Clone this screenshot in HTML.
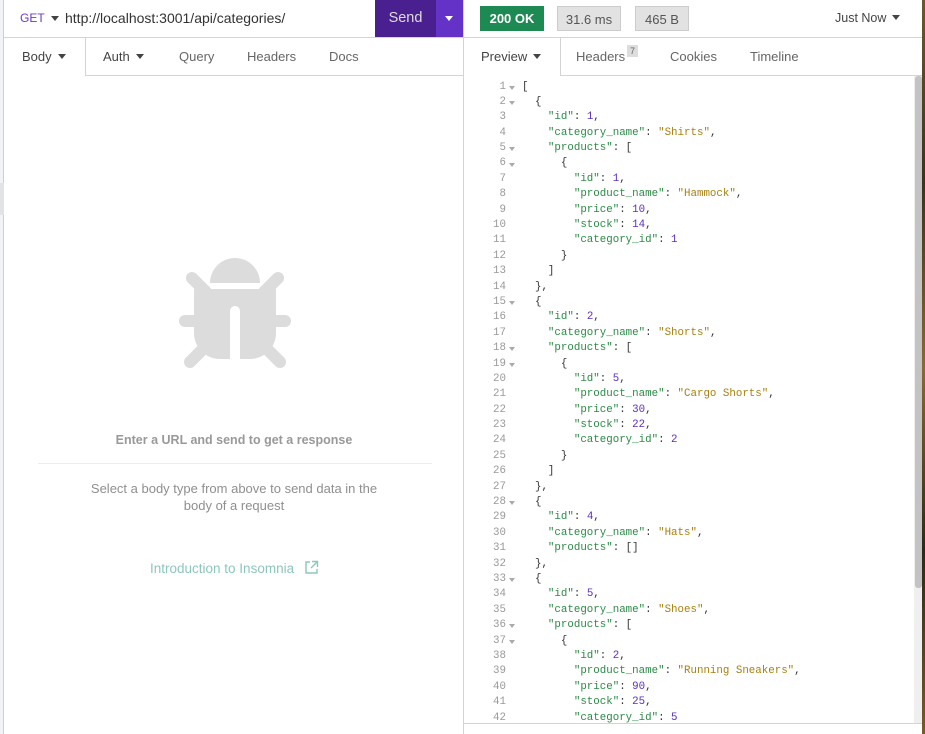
<!DOCTYPE html>
<html><head><meta charset="utf-8"><style>
*{box-sizing:border-box;margin:0;padding:0}
body{width:925px;height:734px;overflow:hidden;background:#fff;font-family:"Liberation Sans",sans-serif;position:relative}
.abs{position:absolute}
.strip{left:0;top:0;width:4px;height:734px;background:#f1f3f6;border-right:1px solid #cfcfcf}
.strip2{left:0;top:183px;width:4px;height:32px;background:#e2e3e5}
.div{left:463px;top:0;width:1px;height:734px;background:#d4d4d4}
.hl{height:1px;background:#d4d4d4}
.tab{position:absolute;top:38px;height:37px;line-height:37px;font-size:13px;color:#666}
.caret{display:inline-block;width:0;height:0;border-left:4px solid transparent;border-right:4px solid transparent;border-top:5px solid #444;vertical-align:middle;margin-left:6px;margin-top:-2px}
.pill{position:absolute;top:6px;height:25px;line-height:25px;font-size:13px;text-align:center}
pre{position:absolute;left:522px;top:79.5px;font-family:"Liberation Mono",monospace;font-size:10.8px;line-height:15.39px;color:#333}
.ln{position:absolute;left:488px;top:79.5px;width:18px;text-align:right;font-family:"Liberation Mono",monospace;font-size:10.8px;line-height:15.39px;color:#999}
.fd{position:absolute;left:509px;width:0;height:0;border-left:3.5px solid transparent;border-right:3.5px solid transparent;border-top:4px solid #aaa}
.k{color:#2b8a46}.s{color:#a8800f}.n{color:#5b2fbf}
</style></head><body>
<div class="abs strip"></div><div class="abs strip2"></div>
<div class="abs div"></div>
<div class="abs" style="left:20px;top:11px;font-size:12px;color:#6a3bc2">GET</div>
<div class="abs" style="left:51px;top:16px;width:0;height:0;border-left:4px solid transparent;border-right:4px solid transparent;border-top:5px solid #444"></div>
<div class="abs" style="left:65px;top:10px;font-size:14px;color:#333">http://localhost:3001/api/categories/</div>
<div class="abs" style="left:375px;top:0;width:61px;height:37px;background:#4a1f8f;color:#ddd;font-size:14.5px;line-height:37px;text-align:center">Send</div>
<div class="abs" style="left:436px;top:0;width:27px;height:37px;background:#6432c7"></div>
<div class="abs" style="left:445px;top:16px;width:0;height:0;border-left:4.5px solid transparent;border-right:4.5px solid transparent;border-top:5px solid #fff"></div>
<div class="abs hl" style="left:4px;top:37px;width:921px"></div>
<div class="tab" style="left:22px;color:#444">Body<span class="caret"></span></div>
<div class="abs" style="left:85px;top:38px;width:1px;height:38px;background:#d4d4d4"></div>
<div class="abs hl" style="left:85px;top:75px;width:378px"></div>
<div class="tab" style="left:103px;color:#444">Auth<span class="caret"></span></div>
<div class="tab" style="left:179px">Query</div>
<div class="tab" style="left:247px">Headers</div>
<div class="tab" style="left:329px">Docs</div>
<svg class="abs" style="left:176px;top:256px" width="118" height="114" viewBox="0 0 118 114">
<g fill="#dcdcdc">
<path d="M34 27 A25 25 0 0 1 84 27 Z"/>
<path d="M18 33 H100 V77 A26 26 0 0 1 74 103 H64 V55 A5 5 0 0 0 54 55 V103 H44 A26 26 0 0 1 18 77 Z"/>
</g>
<g stroke="#dcdcdc" stroke-width="12" stroke-linecap="round">
<line x1="9" y1="65" x2="30" y2="65"/><line x1="88" y1="65" x2="109" y2="65"/>
<line x1="16" y1="22" x2="30" y2="36"/><line x1="102" y1="22" x2="88" y2="36"/>
<line x1="14" y1="106" x2="30" y2="90"/><line x1="104" y1="106" x2="88" y2="90"/>
</g></svg>
<div class="abs" style="left:0;width:468px;top:433px;text-align:center;font-size:12.5px;font-weight:bold;color:#999">Enter a URL and send to get a response</div>
<div class="abs hl" style="left:38px;top:463px;width:394px;background:#ececec"></div>
<div class="abs" style="left:79px;width:310px;top:481px;text-align:center;font-size:13px;line-height:16.5px;color:#8f8f8f">Select a body type from above to send data in the body of a request</div>
<div class="abs" style="left:150px;top:561px;font-size:13.5px;color:#8dc6bd">Introduction to Insomnia</div>
<svg class="abs" style="left:304px;top:560px" width="15" height="15" viewBox="0 0 15 15" fill="none" stroke="#8dc6bd" stroke-width="1.4"><path d="M6 2H2V13H13V9"/><path d="M8 1.5H13.5V7M13.5 1.5L7 8"/></svg>
<div class="pill" style="left:480px;width:64px;background:#1e8a53;color:#fff;font-weight:bold">200 OK</div>
<div class="pill" style="left:557px;width:64px;background:#e2e2e2;border:1px solid #ccc;color:#555">31.6 ms</div>
<div class="pill" style="left:635px;width:54px;background:#e2e2e2;border:1px solid #ccc;color:#555">465 B</div>
<div class="abs" style="left:835px;top:11px;font-size:12.5px;color:#444">Just Now<span class="caret"></span></div>
<div class="tab" style="left:481px;color:#444">Preview<span class="caret"></span></div>
<div class="abs" style="left:560px;top:38px;width:1px;height:38px;background:#d4d4d4"></div>
<div class="abs hl" style="left:560px;top:75px;width:365px"></div>
<div class="tab" style="left:576px">Headers</div>
<div class="abs" style="left:627px;top:45px;width:11px;height:12px;background:#ddd;font-size:9px;line-height:12px;text-align:center;color:#666">7</div>
<div class="tab" style="left:670px">Cookies</div>
<div class="tab" style="left:750px">Timeline</div>
<div class="abs" style="left:914px;top:76px;width:8px;height:647px;background:#efefef"></div>
<div class="abs" style="left:915px;top:76px;width:7px;height:512px;background:#c3c3c3;border-radius:3px"></div>
<div class="abs hl" style="left:464px;top:723px;width:458px"></div>
<div class="abs" style="left:922px;top:0;width:3px;height:734px;background:linear-gradient(#6b5a2a,#3b3320,#8a6a30,#2b2a1a,#7a5a28)"></div>
<div class="ln">1<br>2<br>3<br>4<br>5<br>6<br>7<br>8<br>9<br>10<br>11<br>12<br>13<br>14<br>15<br>16<br>17<br>18<br>19<br>20<br>21<br>22<br>23<br>24<br>25<br>26<br>27<br>28<br>29<br>30<br>31<br>32<br>33<br>34<br>35<br>36<br>37<br>38<br>39<br>40<br>41<br>42</div>
<div class="fd" style="top:86px"></div><div class="fd" style="top:101px"></div><div class="fd" style="top:147px"></div><div class="fd" style="top:163px"></div><div class="fd" style="top:301px"></div><div class="fd" style="top:347px"></div><div class="fd" style="top:363px"></div><div class="fd" style="top:501px"></div><div class="fd" style="top:578px"></div><div class="fd" style="top:624px"></div><div class="fd" style="top:640px"></div>
<pre>[
  {
    <span class="k">"id"</span>: <span class="n">1</span>,
    <span class="k">"category_name"</span>: <span class="s">"Shirts"</span>,
    <span class="k">"products"</span>: [
      {
        <span class="k">"id"</span>: <span class="n">1</span>,
        <span class="k">"product_name"</span>: <span class="s">"Hammock"</span>,
        <span class="k">"price"</span>: <span class="n">10</span>,
        <span class="k">"stock"</span>: <span class="n">14</span>,
        <span class="k">"category_id"</span>: <span class="n">1</span>
      }
    ]
  },
  {
    <span class="k">"id"</span>: <span class="n">2</span>,
    <span class="k">"category_name"</span>: <span class="s">"Shorts"</span>,
    <span class="k">"products"</span>: [
      {
        <span class="k">"id"</span>: <span class="n">5</span>,
        <span class="k">"product_name"</span>: <span class="s">"Cargo Shorts"</span>,
        <span class="k">"price"</span>: <span class="n">30</span>,
        <span class="k">"stock"</span>: <span class="n">22</span>,
        <span class="k">"category_id"</span>: <span class="n">2</span>
      }
    ]
  },
  {
    <span class="k">"id"</span>: <span class="n">4</span>,
    <span class="k">"category_name"</span>: <span class="s">"Hats"</span>,
    <span class="k">"products"</span>: []
  },
  {
    <span class="k">"id"</span>: <span class="n">5</span>,
    <span class="k">"category_name"</span>: <span class="s">"Shoes"</span>,
    <span class="k">"products"</span>: [
      {
        <span class="k">"id"</span>: <span class="n">2</span>,
        <span class="k">"product_name"</span>: <span class="s">"Running Sneakers"</span>,
        <span class="k">"price"</span>: <span class="n">90</span>,
        <span class="k">"stock"</span>: <span class="n">25</span>,
        <span class="k">"category_id"</span>: <span class="n">5</span></pre>
</body></html>
